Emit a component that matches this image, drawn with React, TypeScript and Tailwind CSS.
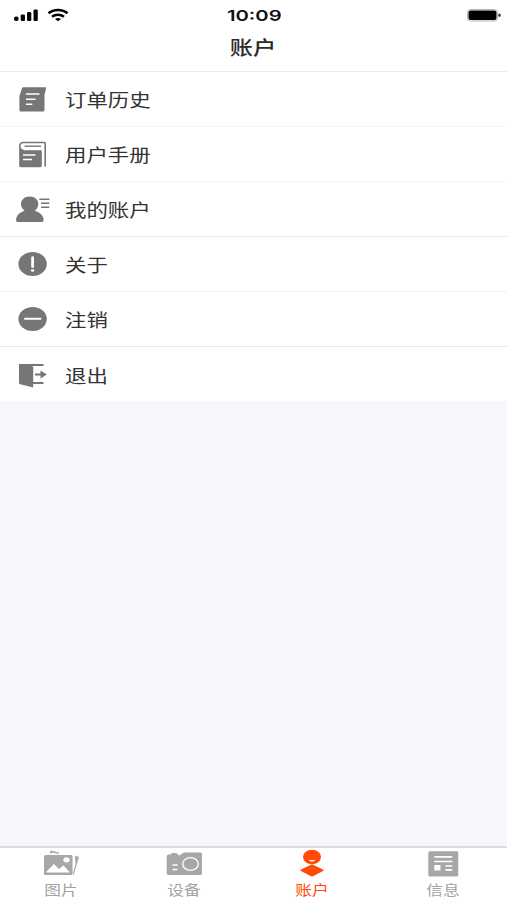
import type { ReactNode } from "react";

const OrderIcon = () => (
  <svg width="36" height="30" viewBox="0 0 36 30" fill="none">
    <path d="M9.5 3.3H31c.8 0 1.2.5 1 1.3L30.500 11v15c0 .9-.6 1.5-1.5 1.5H7c-1 0-1.600-.6-1.600-1.500V12L8 4.300C8.200 3.600 8.700 3.300 9.500 3.300Z" fill="#767676" />
    <path d="M12 10h13.500M12 15.300h9.500M12 20.300h6.300" stroke="#fff" strokeWidth="1.500" />
  </svg>
);

const ManualIcon = () => (
  <svg width="36" height="30" viewBox="0 0 36 30" fill="none">
    <path d="M31.200 27.500V4.700c0-.8-.4-1.200-1.200-1.200H9.500C7 3.500 5.800 5 5.800 7.200s1.400 4 3.700 4" stroke="#767676" strokeWidth="1.600" />
    <path d="M5.200 6.500c.3 3.200 1.800 4.700 4.300 4.700H26.500c.9 0 1.300.4 1.300 1.200V26.500c0 1.200-.6 1.700-1.700 1.700H7c-1.200 0-1.800-.6-1.800-1.700Z" fill="#767676" />
    <path d="M10.500 7.200H27" stroke="#767676" strokeWidth="1.400" />
    <path d="M9 16h12.500M9 20.500h9" stroke="#fff" strokeWidth="1.400" />
  </svg>
);

const ProfileIcon = () => (
  <svg width="36" height="30" viewBox="0 0 36 30" fill="none">
    <path d="M15.600 2.500c5.200 0 8.700 3.300 8.700 7.500 0 2.700-1.300 5-3.400 6.700 5 1.500 8.600 4.800 8.800 9.300 0 1.200-.7 2-2 2H4c-1.300 0-2-.8-2-2 .2-4.500 3.600-7.800 8.600-9.300C8.400 15 7 12.700 7 10c0-4.200 3.500-7.500 8.600-7.500Z" fill="#767676" />
    <path d="M25.300 5.200H35.300M27 9.200h8.300M27 13.200h8.300" stroke="#767676" strokeWidth="1.400" />
  </svg>
);

const AboutIcon = () => (
  <svg width="36" height="30" viewBox="0 0 36 30" fill="none">
    <ellipse cx="18.600" cy="15" rx="14.200" ry="12" fill="#767676" />
    <path d="M18.600 8.700v9" stroke="#fff" strokeWidth="2.800" strokeLinecap="round" />
    <ellipse cx="18.600" cy="21.500" rx="1.700" ry="1.300" fill="#fff" />
  </svg>
);

const DeregisterIcon = () => (
  <svg width="36" height="30" viewBox="0 0 36 30" fill="none">
    <ellipse cx="18.600" cy="15" rx="14.200" ry="12" fill="#767676" />
    <path d="M11 14.700H26.500" stroke="#fff" strokeWidth="2" strokeLinecap="round" />
  </svg>
);

const LogoutIcon = () => (
  <svg width="36" height="30" viewBox="0 0 36 30" fill="none">
    <path d="M5 3.300h9l5.200 2.500V26.500l-13-3.200c-.8-.2-1.200-.6-1.200-1.300Z" fill="#767676" />
    <path d="M5.500 4H29.500M18 22H29.500M21 13.500h7" stroke="#767676" strokeWidth="1.800" />
    <path d="M26.500 9.500l6.300 4-6.300 4Z" fill="#767676" />
  </svg>
);

const PhotosTabIcon = () => (
  <svg width="40" height="28" viewBox="0 -1 40 28" fill="none">
    <path d="M9.500 3.500 10 1.500 18 3.200" stroke="#a7a7a7" strokeWidth="1.500" />
    <path d="M34 5.500 38 7 32.700 24.500 31.500 24.500 34.500 14Z" fill="#a7a7a7" />
    <rect x="3" y="5" width="28.500" height="20" rx="1.500" fill="#a7a7a7" />
    <path d="M5.500 21.500 13 14l5 5 4.500-3.500 6 6.500v.500H5.500Z" fill="#fff" />
    <ellipse cx="25.500" cy="9.800" rx="3.200" ry="2.600" fill="#fff" />
  </svg>
);

const DeviceTabIcon = () => (
  <svg width="40" height="28" viewBox="0 -1 40 28" fill="none">
    <path d="M4.500 4.500H7C7 3.500 7.500 3 8.500 3h3c1 0 1.500.5 2 1.200l2 1.300L19 3c.5-.4 1-.5 1.700-.5H36c1.300 0 2 .7 2 1.800v18.900c0 1.200-.8 1.800-2 1.800H4.700C3.500 25 2.700 24.400 2.700 23.200V6.500C2.700 5.500 3.500 4.500 4.500 4.500Z" fill="#a7a7a7" />
    <ellipse cx="26.500" cy="14" rx="7.800" ry="6.400" stroke="#fff" strokeWidth="1.400" />
    <path d="M8.500 15h5M8.500 19.500h5" stroke="#fff" strokeWidth="1.400" />
  </svg>
);

const AccountTabIcon = () => (
  <svg width="40" height="28" viewBox="0 0 40 28" fill="none">
    <ellipse cx="20" cy="8" rx="9" ry="7.300" fill="#ff4b05" />
    <path d="M17 10.500c1.500.7 4.500.7 6 0-.2 1.500-1.500 2-3 2s-2.800-.5-3-2Z" fill="#fff" />
    <path d="M20 15.500c.5 0 1 .2 1.500.4L31 20.500c.8.400.8 1.200 0 1.600l-9.500 4.900c-1 .5-2 .5-3 0l-9.500-4.900c-.8-.4-.8-1.200 0-1.600l9.500-4.600c.5-.2 1-.4 1.500-.4Z" fill="#ff4b05" />
  </svg>
);

const NewsTabIcon = () => (
  <svg width="40" height="28" viewBox="0 0 40 28" fill="none">
    <rect x="5.300" y="2.300" width="30" height="25.200" rx="1.500" fill="#a7a7a7" />
    <path d="M11.300 7.800H29.300M11.300 12.500H29.300M22.300 17h7M22.300 20.800h7" stroke="#fff" strokeWidth="1.700" />
    <rect x="11.300" y="16" width="6.200" height="5.500" fill="#fff" />
  </svg>
);

interface MenuItem {
  label: string;
  icon: ReactNode;
  rowClass: string;
}

const menuItems: MenuItem[] = [
  { label: "订单历史", icon: <OrderIcon />, rowClass: "h-[55px] border-b border-[#f3f3f3]" },
  { label: "用户手册", icon: <ManualIcon />, rowClass: "h-[55px] border-b border-[#f3f3f3]" },
  { label: "我的账户", icon: <ProfileIcon />, rowClass: "h-[55px] border-b border-[#e6e6e6]" },
  { label: "关于", icon: <AboutIcon />, rowClass: "h-[55px] border-b border-[#f1f1f1]" },
  { label: "注销", icon: <DeregisterIcon />, rowClass: "h-[55px] border-b border-[#e6e6e6]" },
  { label: "退出", icon: <LogoutIcon />, rowClass: "h-[54px] pt-[3px]" },
];

const tabs = [
  { label: "图片", icon: <PhotosTabIcon />, color: "text-[#a3a3a3]", width: "w-[122px]" },
  { label: "设备", icon: <DeviceTabIcon />, color: "text-[#a3a3a3]", width: "w-[123px]" },
  { label: "账户", icon: <AccountTabIcon />, color: "text-[#ff4b05]", width: "w-[133px]" },
  { label: "信息", icon: <NewsTabIcon />, color: "text-[#a3a3a3]", width: "w-[129px]" },
];

function StatusBar() {
  return (
    <div className="flex h-[30px] items-center justify-between pl-[13px] pr-[5px]">
      <div className="flex w-[80px] items-center gap-2">
        <svg width="26" height="14" viewBox="0 0 26 14" fill="#050505">
          <rect x="1" y="8.500" width="4.600" height="4.500" rx="2" />
          <rect x="7.700" y="6.500" width="4.300" height="6.500" rx="1.200" />
          <rect x="14" y="4" width="4.300" height="9" rx="1.200" />
          <rect x="20.500" y="1.500" width="4.300" height="11.500" rx="1.200" />
        </svg>
        <svg width="22" height="14" viewBox="0 0 22 14" fill="none" stroke="#050505">
          <path d="M1.500 5.200C6.500.9 15.500.9 20.500 5.200" strokeWidth="2.600" />
          <path d="M5 8.700c3.300-2.700 8.700-2.700 12 0" strokeWidth="2.400" />
          <path d="M8 11c1.700-1.300 4.300-1.300 6 0l-3 2.200Z" fill="#050505" stroke="none" />
        </svg>
      </div>
      <span className="mr-[7px] scale-x-[1.350] font-['Inter',sans-serif] text-[15px] font-semibold leading-none text-[#111]">10:09</span>
      <div className="flex w-[80px] justify-end">
        <svg width="36" height="14" viewBox="0 0 36 14">
          <rect x="1.500" y="1.500" width="30" height="11.500" rx="3" fill="#fff" stroke="#b5b5b5" />
          <rect x="2.500" y="2.500" width="28" height="9.500" rx="2" fill="#000" />
          <ellipse cx="33.500" cy="7.300" rx="1.200" ry="1.700" fill="#333" />
        </svg>
      </div>
    </div>
  );
}

export default function App() {
  return (
    <div className="flex h-[900px] w-full flex-col overflow-hidden bg-[#f5f7fb] font-['Noto_Sans_CJK_SC',sans-serif]">
      {/* Header */}
      <header className="h-[72px] border-b border-[#eaeaea] bg-white">
        <StatusBar />
        <h1 className="flex h-[33px] items-center justify-center pr-px">
          <span className="scale-x-[1.220] text-[19px] font-medium leading-none text-[#2b2b2b]">账户</span>
        </h1>
      </header>

      {/* Menu */}
      <ul className="bg-white">
        {menuItems.map((item) => (
          <li key={item.label} className={`flex items-center pl-[14px] ${item.rowClass}`}>
            {item.icon}
            <span className="mb-px ml-[15px] origin-left scale-x-[1.190] text-[18px] leading-none text-[#333]">{item.label}</span>
          </li>
        ))}
      </ul>

      {/* Tab bar */}
      <nav className="mt-auto flex h-[54px] border-t-2 border-[#dcdde0] bg-white">
        {tabs.map((tab) => (
          <button key={tab.label} className={`flex shrink-0 flex-col items-center pt-px ${tab.width} ${tab.color}`}>
            {tab.icon}
            <span className="mt-[5px] scale-x-[1.190] text-[14px] leading-none">{tab.label}</span>
          </button>
        ))}
      </nav>
    </div>
  );
}
